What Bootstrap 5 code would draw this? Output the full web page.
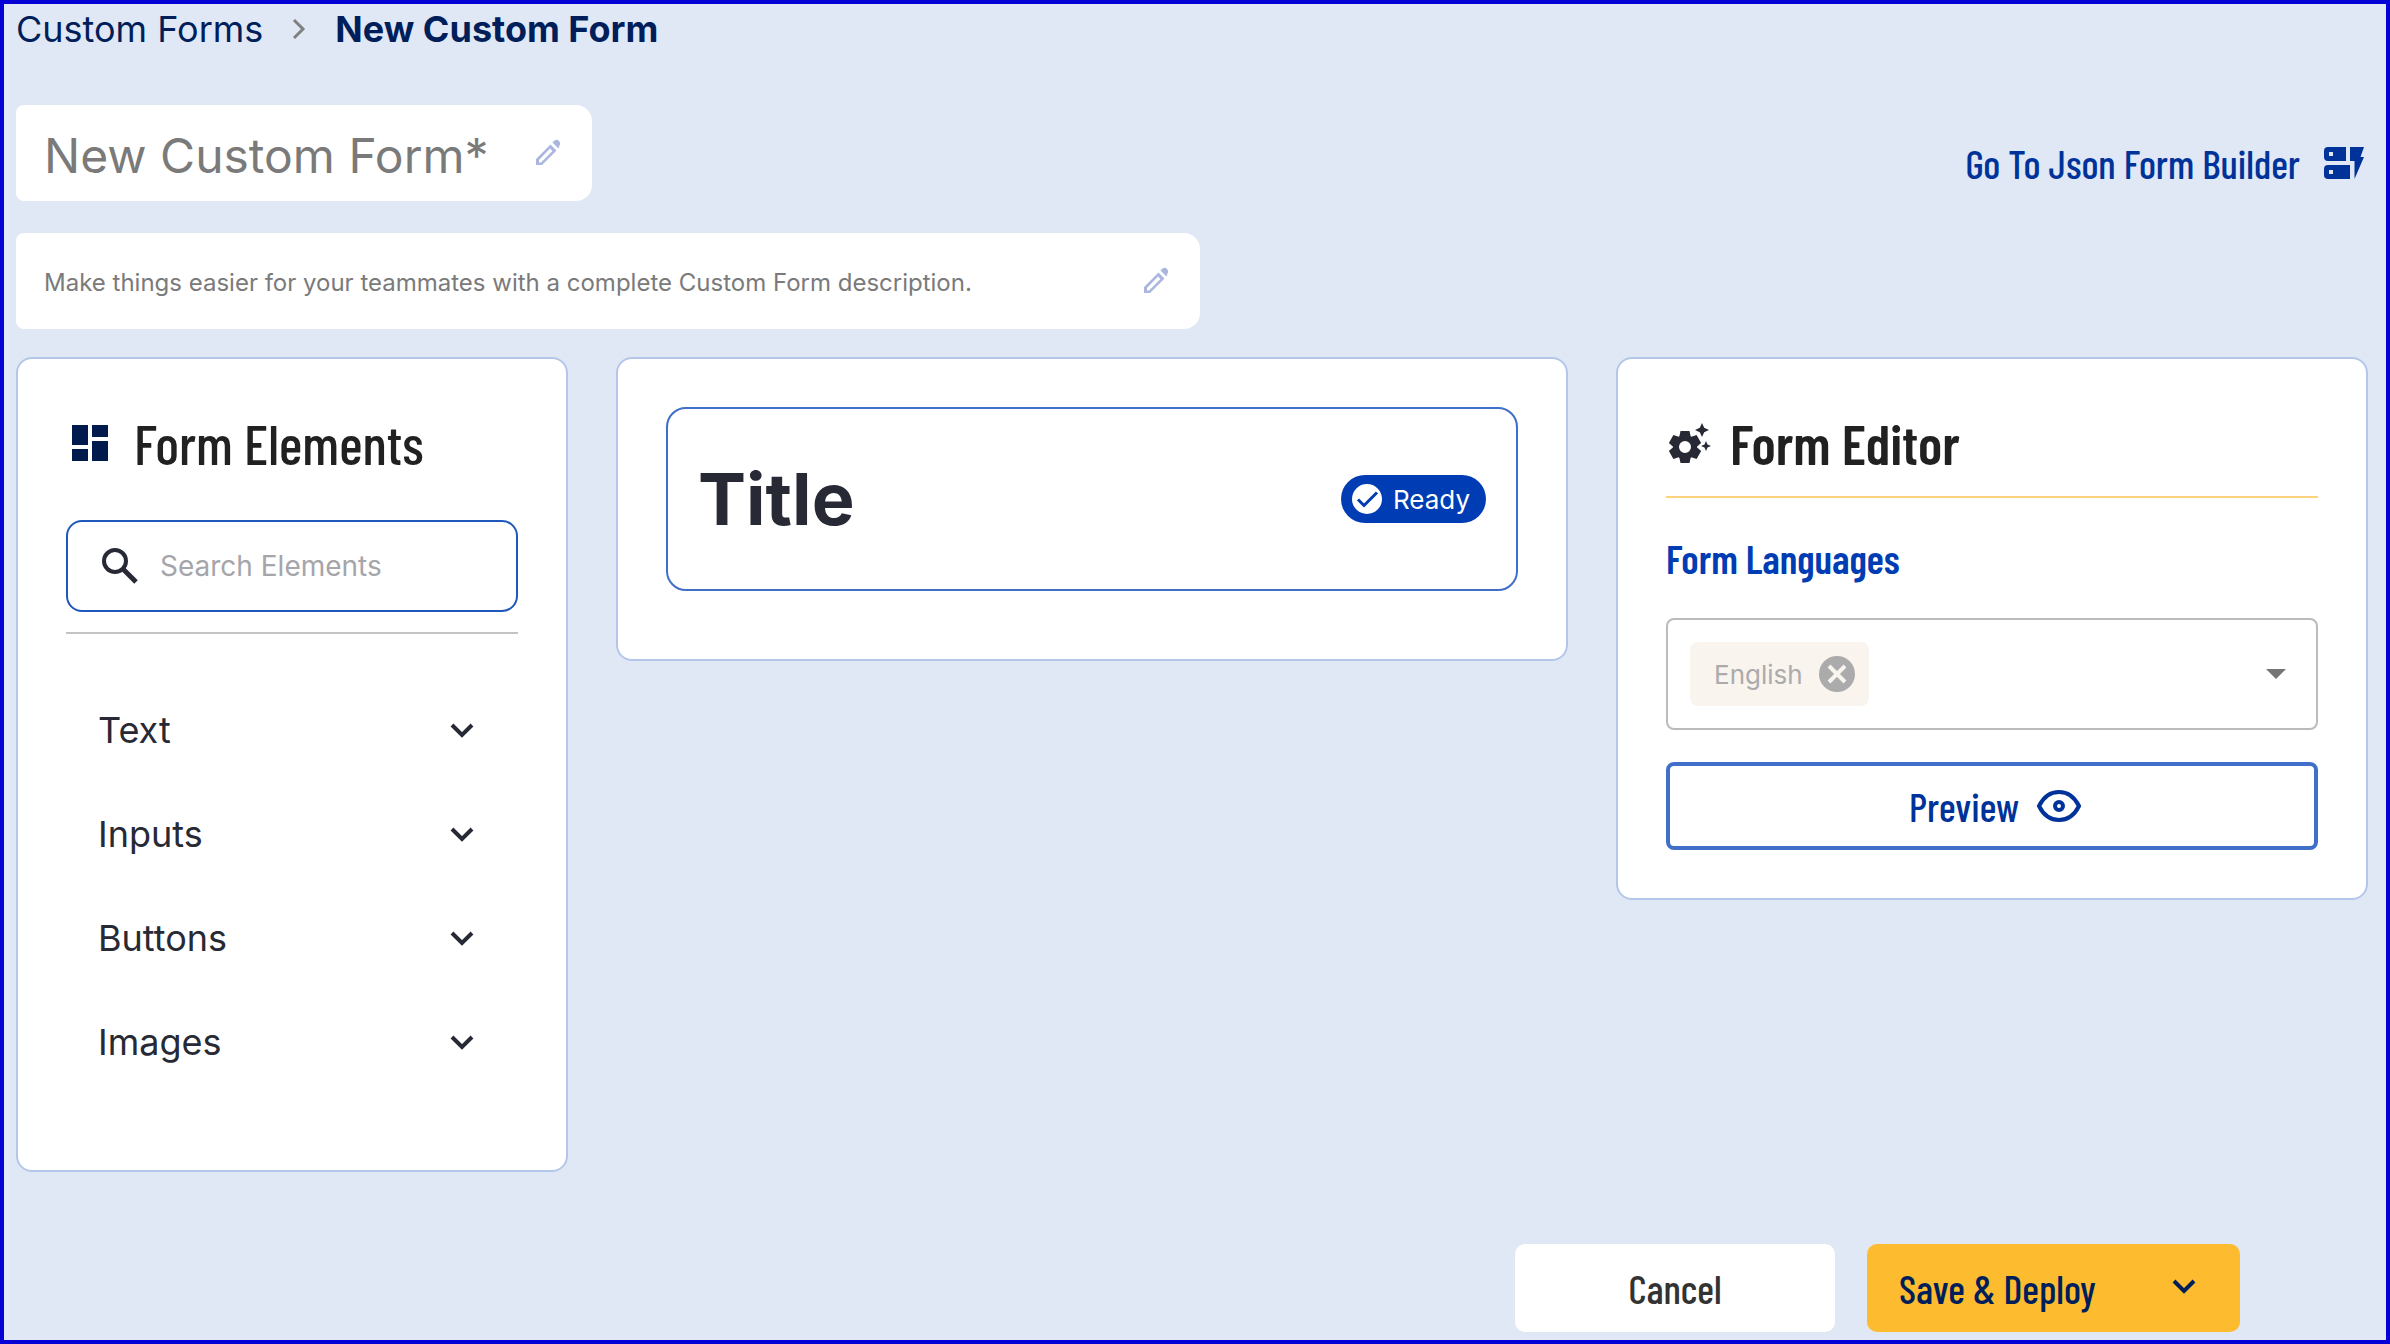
<!DOCTYPE html>
<html lang="en">
<head>
<meta charset="utf-8">
<meta name="viewport" content="width=device-width, initial-scale=1">
<title>New Custom Form</title>
<link href="https://cdn.jsdelivr.net/npm/bootstrap@5.3.0/dist/css/bootstrap.min.css" rel="stylesheet">
<style>
  :root { --navy: #001a4d; --royal: #003399; --brand: #003cb3; --line: #b4c7ea; --ink: #272935; }
  body { background: #e0e7f5; color: var(--ink); font-family: Inter, "Liberation Sans", sans-serif; }
  .app-frame { min-height: 100vh; border: 4px solid #0500d5; padding: 0 18px 8px 12px; overflow: hidden; }
  .narrow { font-family: "Barlow Condensed", "Liberation Sans Narrow", "Liberation Sans", sans-serif; }
  svg { display: block; flex: none; fill: currentColor; }

  .crumbs { font-size: 36px; line-height: 50px; gap: 24px; color: #001e5a; }
  .crumbs a { color: inherit; }
  .crumbs svg { color: #808080; }

  .page-head { padding-top: 51px; }
  .edit-box { height: 96px; background: #fff; border-radius: 8px 16px 16px 8px; padding: 0 28px; }
  .edit-box input { border: 0; padding: 4px 0 0; background: none; box-shadow: none; color: #777; }
  .edit-box input::placeholder { color: #7a7a7a; opacity: 1; }
  .edit-box .btn { color: #aab6de; }
  .name-box { width: 576px; max-width: 100%; }
  .name-box input { font-size: 48px; line-height: 60px; padding-top: 6px; }
  .desc-box { width: 1184px; max-width: 100%; }
  .desc-box input { font-size: 24px; line-height: 36px; }
  .json-link { font-size: 40px; line-height: 52px; font-weight: 500; gap: 24px; color: var(--royal); }

  .builder { --bs-gutter-x: 48px; margin-top: 28px; }
  .panel { background: #fff; border: 2px solid var(--line); border-radius: 16px; padding: 48px; }
  .panel-title { font-size: 56px; line-height: 72px; color: #212121; margin: 0; gap: 20px; font-weight: 500; }
  .elements { padding-bottom: 76px; }
  .search-box { height: 92px; border: 2px solid #1f57ba; border-radius: 16px; padding: 0 32px; gap: 20px; margin-top: 41px; }
  .search-box input { border: 0; padding: 0; font-size: 28px; line-height: 40px; background: none; box-shadow: none; }
  .search-box input::placeholder { color: #a5a5aa; opacity: 1; }
  .rule { border: 0; border-top: 2px solid #c4c4c4; opacity: 1; margin: 20px 0 44px; }
  .group-btn { height: 104px; padding: 0 32px; border: 0; font-size: 36px; color: var(--ink); }

  .title-box { height: 184px; border: 2px solid #3f6fc8; border-radius: 20px; padding: 0 30px; margin-bottom: 20px; }
  .title-box h1 { font-size: 72px; line-height: 88px; font-weight: 700; margin: 0; }
  .ready { height: 48px; padding: 0 16px 0 8px; gap: 8px; background: var(--brand); color: #fff; font-size: 26px; font-weight: 400; }

  .editor-head { padding-bottom: 17px; border-bottom: 2px solid #ffd27f; }
  .editor-head .panel-title { gap: 16px; font-weight: 600; }
  .lang-label { font-size: 40px; line-height: 48px; font-weight: 600; color: var(--brand); margin: 36px 0; }
  .lang-box { height: 112px; border: 2px solid #bbb; border-radius: 8px; padding: 0 22px; }
  .lang-chip { height: 64px; border-radius: 8px; padding: 0 11px 0 24px; gap: 13px; background: #faf4ef; color: #ababab; font-size: 26px; }
  .lang-box select { border: 0; background: none; box-shadow: none; appearance: none; height: 64px; }
  .lang-box > svg { color: #757575; pointer-events: none; }
  .btn-preview { height: 88px; border: 4px solid #3f6fc8; border-radius: 8px; padding: 0 12px 0 20px; font-size: 40px; font-weight: 500; gap: 16px; color: var(--royal); margin-top: 32px; }

  .actions { gap: 32px; margin-right: 128px; margin-top: 72px; }
  .actions .btn { height: 88px; border: 0; border-radius: 10px; font-size: 40px; font-weight: 500; }
  .btn-cancel { width: 320px; background: #fff; color: #333; }
  .btn-save { width: 373px; padding: 0 32px; background: #fdbb2f; color: #001e5a; }
</style>
</head>
<body>
<div class="app-frame d-flex flex-column">
  <nav class="crumbs d-flex align-items-center" aria-label="Breadcrumb">
    <a href="#" class="text-decoration-none">Custom Forms</a>
    <svg width="24" height="28" viewBox="0 0 24 28" fill="none"><path d="M7 5l9 9-9 9" fill="none" stroke="currentColor" stroke-width="3"/></svg>
    <span class="fw-bold" aria-current="page">New Custom Form</span>
  </nav>

  <header class="page-head d-flex justify-content-between align-items-start flex-wrap">
    <div class="edit-box name-box d-flex align-items-center mb-4">
      <input type="text" class="form-control" aria-label="Form name" placeholder="New Custom Form*">
      <button class="btn border-0 p-0" type="button" aria-label="Edit name">
        <svg width="32" height="32" viewBox="0 0 32 32"><path fill-rule="evenodd" d="M4 28v-6L18.500 7.500l6 6L10 28zM7 25.500h2L20.500 14 18 11.500 7 23zM20.500 5.500l2-2q2.500-1.500 4.500.5t.5 4.500L26.500 11.500z"/></svg>
      </button>
    </div>
    <a href="#" class="json-link narrow d-flex align-items-center text-decoration-none mt-4 pt-2 me-1">Go To Json Form Builder
      <svg width="40" height="32" viewBox="0 0 40 32"><path fill-rule="evenodd" d="M4 0H22V14H4Q0 14 0 10V4Q0 0 4 0zM5 5V9H9V5zM4 18H26V32H4Q0 32 0 28V22Q0 18 4 18zM5 23V27H9V23zM26 0H40L36.500 10H40L30.500 32V14H26z"/></svg>
    </a>
  </header>
  <div class="edit-box desc-box d-flex align-items-center mt-2">
    <input type="text" class="form-control" aria-label="Form description" placeholder="Make things easier for your teammates with a complete Custom Form description.">
    <button class="btn border-0 p-0" type="button" aria-label="Edit description">
      <svg width="32" height="32" viewBox="0 0 32 32"><path fill-rule="evenodd" d="M4 28v-6L18.500 7.500l6 6L10 28zM7 25.500h2L20.500 14 18 11.500 7 23zM20.500 5.500l2-2q2.500-1.500 4.500.5t.5 4.500L26.500 11.500z"/></svg>
    </button>
  </div>

  <main class="builder row align-items-start">
    <div class="col-3">
      <aside class="panel elements">
        <h2 class="panel-title narrow d-flex align-items-center">
          <svg width="48" height="48" viewBox="0 0 48 48" color="#001a4d"><path d="M6 6H22V26H6zM26 6H42V18H26zM6 30H22V42H6zM26 22H42V42H26z"/></svg>
          Form Elements
        </h2>
        <div class="search-box d-flex align-items-center">
          <svg width="40" height="40" viewBox="0 0 40 40"><g fill="none" stroke="currentColor" stroke-width="4"><circle cx="15" cy="15" r="11"/><path d="M23 23L36 36" stroke-width="5"/></g></svg>
          <input type="search" class="form-control" aria-label="Search Elements" placeholder="Search Elements">
        </div>
        <hr class="rule">
        <button type="button" class="group-btn btn w-100 d-flex align-items-center justify-content-between">Text
          <svg width="48" height="24" viewBox="0 0 48 24"><path d="M14 7L24 17 34 7" fill="none" stroke="currentColor" stroke-width="4"/></svg></button>
        <button type="button" class="group-btn btn w-100 d-flex align-items-center justify-content-between">Inputs
          <svg width="48" height="24" viewBox="0 0 48 24"><path d="M14 7L24 17 34 7" fill="none" stroke="currentColor" stroke-width="4"/></svg></button>
        <button type="button" class="group-btn btn w-100 d-flex align-items-center justify-content-between">Buttons
          <svg width="48" height="24" viewBox="0 0 48 24"><path d="M14 7L24 17 34 7" fill="none" stroke="currentColor" stroke-width="4"/></svg></button>
        <button type="button" class="group-btn btn w-100 d-flex align-items-center justify-content-between">Images
          <svg width="48" height="24" viewBox="0 0 48 24"><path d="M14 7L24 17 34 7" fill="none" stroke="currentColor" stroke-width="4"/></svg></button>
      </aside>
    </div>

    <div class="col-5">
      <section class="panel">
        <div class="title-box d-flex align-items-center justify-content-between">
          <h1>Title</h1>
          <span class="ready rounded-pill d-flex align-items-center">
            <svg width="36" height="36" viewBox="0 0 36 36"><circle cx="18" cy="18" r="15"/><path d="M9 18.500l6 6L28 11.500" fill="none" stroke="#003cb3" stroke-width="3"/></svg>
            Ready
          </span>
        </div>
      </section>
    </div>

    <div class="col-4">
      <section class="panel">
        <div class="editor-head">
          <h2 class="panel-title narrow d-flex align-items-center">
            <svg width="48" height="48" viewBox="0 0 48 48" color="#272935">
              <g transform="translate(19 28)">
                <circle r="9" fill="none" stroke="currentColor" stroke-width="6"/>
                <path id="tooth" d="M-6-9L-4.500-16H4.500L6-9z"/>
                <use href="#tooth" transform="rotate(60)"/><use href="#tooth" transform="rotate(120)"/><use href="#tooth" transform="rotate(180)"/><use href="#tooth" transform="rotate(240)"/><use href="#tooth" transform="rotate(300)"/>
              </g>
              <path d="M36 4l2.200 4.800L43 11l-4.800 2.200L36 18l-2.200-4.800L29 11l4.800-2.200zM40 22l1.500 3.500L45 27l-3.500 1.500L40 32l-1.500-3.500L35 27l3.500-1.500z"/>
            </svg>
            Form Editor
          </h2>
        </div>
        <label for="lang" class="lang-label narrow d-block">Form Languages</label>
        <div class="lang-box d-flex align-items-center">
          <span class="lang-chip d-flex align-items-center">English
            <button type="button" class="btn border-0 p-0" aria-label="Remove English">
              <svg width="42" height="42" viewBox="0 0 42 42" color="#ababab"><circle cx="21" cy="21" r="18"/><path d="M13 13L29 29M29 13L13 29" stroke="#faf4ef" stroke-width="4"/></svg>
            </button>
          </span>
          <select id="lang" class="flex-grow-1"><option></option></select>
          <svg width="36" height="12" viewBox="0 0 36 12"><path d="M8 1H28L18 11z"/></svg>
        </div>
        <button type="button" class="btn-preview narrow btn w-100 d-flex align-items-center justify-content-center">Preview
          <svg width="48" height="40" viewBox="0 0 48 40"><path d="M4 20Q11 6 24 6T44 20Q37 34 24 34T4 20z" fill="none" stroke="currentColor" stroke-width="4"/><circle cx="24" cy="20" r="4" fill="none" stroke="currentColor" stroke-width="4"/></svg>
        </button>
      </section>
    </div>
  </main>

  <footer class="actions narrow d-flex justify-content-end">
    <button type="button" class="btn btn-cancel">Cancel</button>
    <button type="button" class="btn btn-save d-flex align-items-center justify-content-between">Save &amp; Deploy
      <svg width="48" height="24" viewBox="0 0 48 24"><path d="M14 5L24 15 34 5" fill="none" stroke="currentColor" stroke-width="4"/></svg></button>
  </footer>
</div>
<script src="https://cdn.jsdelivr.net/npm/bootstrap@5.3.0/dist/js/bootstrap.bundle.min.js"></script>
</body>
</html>
